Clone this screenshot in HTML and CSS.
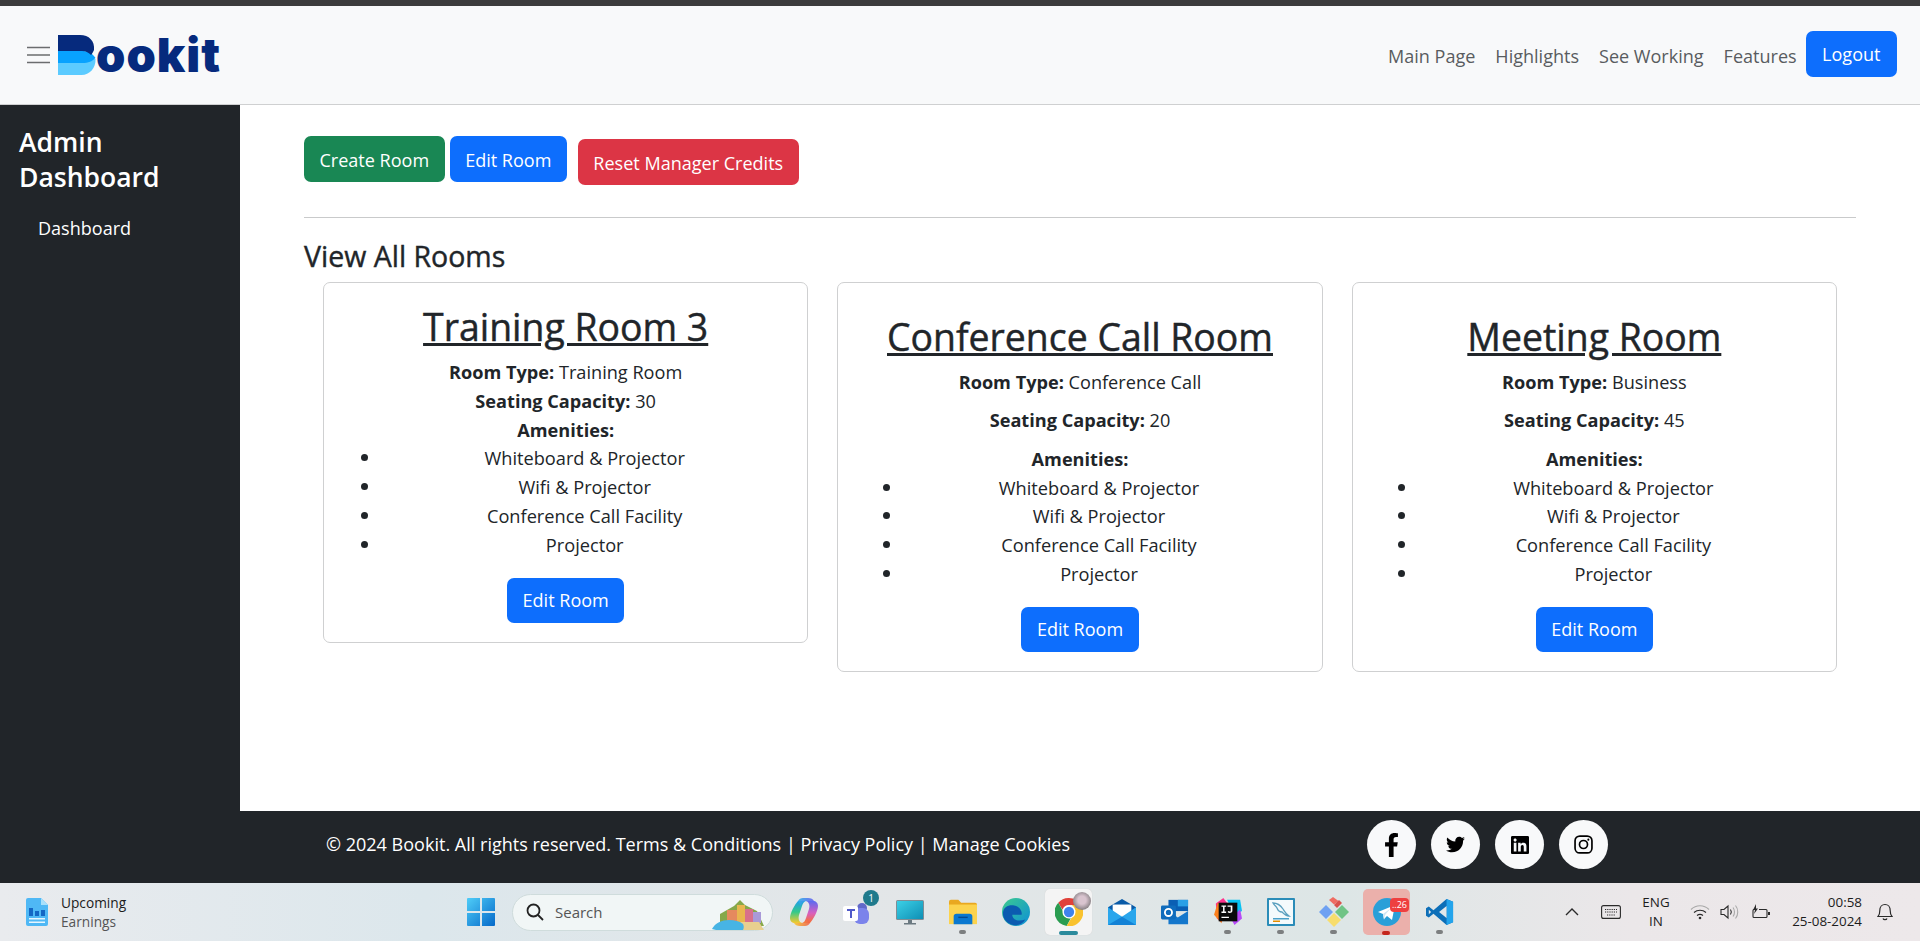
FILE: index.html
```html
<!DOCTYPE html>
<html lang="en">
<head>
<meta charset="utf-8">
<title>Bookit</title>
<link rel="stylesheet" href="styles.css">
</head>
<body>
<div class="top-strip"></div>
<header class="navbar">
  <div class="brand">
    <svg class="burger" viewBox="0 0 23 18"><path d="M0 1.5h23M0 9h23M0 16.500h23"/></svg>
    <div class="logo">
      <svg class="logo-b" viewBox="0 0 38 40">
        <path fill="#5ccbff" d="M0 24h37.500c.5 9-6 16-14 16H0z"/>
        <path fill="#08a2ff" d="M0 16h24c6 0 10 2 13.500 7-3 3-7 5-13.500 5H0z"/>
        <path fill="#062a7d" d="M0 0h22c9 0 15 6 14 15-1.500 3-2 4-3 5-2-2-5-4-9-4H0z"/>
      </svg>
      <span class="logo-text">ookit</span>
    </div>
  </div>
  <nav class="nav-links">
    <a>Main Page</a><a>Highlights</a><a>See Working</a><a>Features</a>
    <button class="btn blue logout">Logout</button>
  </nav>
</header>
<div class="shell">
  <aside class="sidebar">
    <h4>Admin Dashboard</h4>
    <a>Dashboard</a>
  </aside>
  <div class="right">
    <main class="main">
      <div class="actions">
        <button class="btn green">Create Room</button>
        <button class="btn blue">Edit Room</button>
        <button class="btn red">Reset Manager Credits</button>
      </div>
      <hr>
      <h3>View All Rooms</h3>
      <div class="cards">
        <article class="card tight">
          <h2>Training Room 3</h2>
          <p><b>Room Type:</b> Training Room</p>
          <p><b>Seating Capacity:</b> 30</p>
          <p><b>Amenities:</b></p>
          <ul><li>Whiteboard &amp; Projector</li><li>Wifi &amp; Projector</li><li>Conference Call Facility</li><li>Projector</li></ul>
          <button class="btn blue">Edit Room</button>
        </article>
        <article class="card">
          <h2>Conference Call Room</h2>
          <p><b>Room Type:</b> Conference Call</p>
          <p><b>Seating Capacity:</b> 20</p>
          <p class="last"><b>Amenities:</b></p>
          <ul><li>Whiteboard &amp; Projector</li><li>Wifi &amp; Projector</li><li>Conference Call Facility</li><li>Projector</li></ul>
          <button class="btn blue">Edit Room</button>
        </article>
        <article class="card">
          <h2>Meeting Room</h2>
          <p><b>Room Type:</b> Business</p>
          <p><b>Seating Capacity:</b> 45</p>
          <p class="last"><b>Amenities:</b></p>
          <ul><li>Whiteboard &amp; Projector</li><li>Wifi &amp; Projector</li><li>Conference Call Facility</li><li>Projector</li></ul>
          <button class="btn blue">Edit Room</button>
        </article>
      </div>
    </main>
    <footer class="footer">
      <div class="copy">© 2024 Bookit. All rights reserved. Terms &amp; Conditions | Privacy Policy | Manage Cookies</div>
      <div class="socials">
        <a class="social"><svg class="i-fb" viewBox="0 0 320 512"><path d="M279.14 288l14.22-92.66h-88.91v-60.13c0-25.35 12.42-50.06 52.24-50.06h40.42V6.26S260.43 0 225.36 0c-73.22 0-121.08 44.38-121.08 124.72v70.62H22.89V288h81.39v224h100.17V288z"/></svg></a>
        <a class="social"><svg class="i-tw" viewBox="0 0 512 512"><path d="M459.37 151.716c.325 4.548.325 9.097.325 13.645 0 138.72-105.583 298.558-298.558 298.558-59.452 0-114.68-17.219-161.137-47.106 8.447.974 16.568 1.299 25.34 1.299 49.055 0 94.213-16.568 130.274-44.832-46.132-.975-84.792-31.188-98.112-72.772 6.498.974 12.995 1.624 19.818 1.624 9.421 0 18.843-1.3 27.614-3.573-48.081-9.747-84.143-51.98-84.143-102.985v-1.299c13.969 7.797 30.214 12.67 47.431 13.319-28.264-18.843-46.781-51.005-46.781-87.391 0-19.492 5.197-37.36 14.294-52.954 51.655 63.675 129.3 105.258 216.365 109.807-1.624-7.797-2.599-15.918-2.599-24.04 0-57.828 46.782-104.934 104.934-104.934 30.213 0 57.502 12.67 76.67 33.137 23.715-4.548 46.456-13.32 66.599-25.34-7.798 24.366-24.366 44.833-46.132 57.827 21.117-2.273 41.584-8.122 60.426-16.243-14.292 20.791-32.161 39.308-52.628 54.253z"/></svg></a>
        <a class="social"><svg class="i-li" viewBox="0 32 448 448"><path d="M416 32H31.9C14.3 32 0 46.5 0 64.3v383.4C0 465.5 14.3 480 31.9 480H416c17.6 0 32-14.5 32-32.3V64.3c0-17.8-14.4-32.3-32-32.3zM135.4 416H69V202.2h66.5V416zm-33.2-243c-21.3 0-38.5-17.3-38.5-38.5S80.9 96 102.2 96c21.2 0 38.5 17.3 38.5 38.5 0 21.3-17.2 38.5-38.5 38.500zm282.100 243h-66.400V312c0-24.800-.5-56.700-34.500-56.700-34.600 0-39.900 27-39.900 54.900V416h-66.400V202.200h63.700v29.200h.9c8.900-16.800 30.600-34.500 62.900-34.500 67.200 0 79.700 44.300 79.700 101.900V416z"/></svg></a>
        <a class="social"><svg class="i-ig" viewBox="0 0 18 18"><rect x="1" y="1" width="16" height="16" rx="4.500"/><circle cx="9" cy="9" r="3.800"/><circle class="dot" cx="13.600" cy="4.400" r="1"/></svg></a>
      </div>
    </footer>
  </div>
</div>
<div class="taskbar">
  <div class="tb-left">
    <svg class="tb-widget" viewBox="0 0 22 28">
      <path fill="#4fb8f5" d="M2 0h13l7 7v19a2 2 0 0 1-2 2H2a2 2 0 0 1-2-2V2a2 2 0 0 1 2-2z"/>
      <path fill="#a8e0fb" d="M15 0l7 7h-7z"/>
      <path fill="#1467c4" d="M3 10h4v8H3zM9 13h4v5H9zM15 12h4v6h-4z"/>
      <path fill="#e6f6ff" d="M3 20h16v1.500H3zM3 23.500h16V25H3z"/>
    </svg>
    <div class="tb-news"><span>Upcoming</span><span class="muted">Earnings</span></div>
  </div>
  <div class="tb-center">
    <svg class="tb-ico win" viewBox="0 0 28 28">
      <defs><linearGradient id="w" x1="0" y1="0" x2="1" y2="1"><stop offset="0" stop-color="#4fcdf8"/><stop offset="1" stop-color="#0569c9"/></linearGradient></defs>
      <path fill="url(#w)" d="M1 0h12v13H0V1a1 1 0 0 1 1-1zM15 0h12a1 1 0 0 1 1 1v12H15zM0 15h13v13H1a1 1 0 0 1-1-1zM15 15h13v12a1 1 0 0 1-1 1H15z"/>
    </svg>
    <div class="search">
      <svg class="s-ico" viewBox="0 0 18 18"><circle cx="7.500" cy="7.500" r="6"/><path d="M12 12l5 5"/></svg>
      <span>Search</span>
      <svg class="s-pic" viewBox="0 0 54 32">
        <path fill="#86a84a" d="M8 16L22 8l6-6 5 5 12 6 7 15H8z"/>
        <path fill="#e58a5e" d="M15 12h10v12H15z"/>
        <path fill="#e9b64f" d="M25 7h8v17h-8z"/>
        <path fill="#d8708b" d="M33 11h8v13h-8z"/>
        <path fill="#a99ad8" d="M41 14h8v11h-8z"/>
        <path fill="#e8cf8f" d="M18 24h29l5 8H28z"/>
        <path fill="#47b4e4" d="M0 31c3-6 10-9 17-9 6 0 10 1 14 4 1 2 1 4 0 6H4z"/>
      </svg>
    </div>
    <div class="tile first">
      <svg class="tb-ico" viewBox="0 0 28 28">
        <defs>
          <linearGradient id="c1" x1="0" y1="0" x2="0" y2="1"><stop offset="0" stop-color="#1f9fe8"/><stop offset=".5" stop-color="#35c98a"/><stop offset="1" stop-color="#f6c92e"/></linearGradient>
          <linearGradient id="c2" x1="0" y1="0" x2="0" y2="1"><stop offset="0" stop-color="#5b6cf0"/><stop offset=".55" stop-color="#d85fc0"/><stop offset="1" stop-color="#f8702f"/></linearGradient>
          <linearGradient id="c3" x1="0" y1="0" x2="1" y2="0"><stop offset="0" stop-color="#2bb0e8"/><stop offset="1" stop-color="#6a5ef0"/></linearGradient>
          <linearGradient id="c4" x1="0" y1="0" x2="1" y2="0"><stop offset="0" stop-color="#f6c92e"/><stop offset="1" stop-color="#f0604c"/></linearGradient>
        </defs>
        <path fill="url(#c1)" d="M8 3C5 6 0 15 0 20c0 3 2 5 5 5h7c-3-1-4-4-3-8l3-9c1-3 2-5 5-5z"/>
        <path fill="url(#c2)" d="M20 25c3-3 8-12 8-17 0-3-2-5-5-5h-7c3 1 4 4 3 8l-3 9c-1 3-2 5-5 5z"/>
        <path fill="url(#c3)" d="M8 3c1-2 3-3 5-3h5c3 0 5 1 6 3h-8c-3 0-5 2-5 5z" opacity=".9"/>
        <path fill="url(#c4)" d="M20 25c-1 2-3 3-5 3H10c-3 0-5-1-6-3h8c3 0 5-2 5-5z" opacity=".9"/>
      </svg>
    </div>
    <div class="tile">
      <svg class="tb-ico" viewBox="0 0 28 28">
        <circle fill="#6168c9" cx="19" cy="10" r="5"/>
        <rect fill="#7b83eb" x="11" y="10" width="15" height="16" rx="6"/>
        <rect fill="#fff" x="0" y="8" width="15" height="15" rx="2"/>
        <path fill="#5059c9" d="M4 11h8v2H9v7H7v-7H4z"/>
      </svg>
      <span class="teams-badge">1</span>
    </div>
    <div class="tile">
      <svg class="tb-ico" viewBox="0 0 28 28">
        <defs><linearGradient id="m" x1="0" y1="0" x2="1" y2="1"><stop offset="0" stop-color="#3bd0e6"/><stop offset="1" stop-color="#0f8fb5"/></linearGradient></defs>
        <rect fill="#7f8d95" x="0" y="2" width="28" height="20" rx="1.500"/>
        <rect fill="url(#m)" x="1" y="3" width="26" height="18"/>
        <path fill="#6a7880" d="M12 22h4v3h4v1.500H8V25h4z"/>
      </svg>
    </div>
    <div class="tile run">
      <svg class="tb-ico" viewBox="0 0 30 28">
        <path fill="#e9a820" d="M0 3a2 2 0 0 1 2-2h8l3 3h15a2 2 0 0 1 2 2v3H0z"/>
        <path fill="#fcd34d" d="M0 6h30v21H0z"/>
        <path fill="#0a78d0" d="M5 19a3 3 0 0 1 3-3h14a3 3 0 0 1 3 3v8H5z"/>
        <path fill="#044a8f" d="M10 19h10v1.500H10z"/>
      </svg>
    </div>
    <div class="tile">
      <svg class="tb-ico" viewBox="0 0 30 30">
        <defs><linearGradient id="e1" x1="0" y1="0" x2="1" y2="1"><stop offset="0" stop-color="#3ccb8e"/><stop offset="1" stop-color="#0d8fd8"/></linearGradient></defs>
        <circle fill="url(#e1)" cx="15" cy="15" r="15"/>
        <path fill="#0b5bb0" d="M1 17C1 9 8 7 13 8c5 1 9 5 8 10H11c0 5 6 8 14 5-3 5-9 7-13 6C6 28 1 23 1 17z"/>
      </svg>
    </div>
    <div class="tile active">
      <svg class="tb-ico" viewBox="0 0 30 30">
        <path fill="#e0413a" d="M15 0a15 15 0 0 1 13 7.500H15a7.500 7.500 0 0 0-7 5L3.500 5A15 15 0 0 1 15 0z"/>
        <path fill="#2a9c50" d="M3.500 5L9 15a6.500 6.500 0 0 0 8 6.500L12.500 30A15 15 0 0 1 3.500 5z"/>
        <path fill="#f9c22e" d="M28 7.500A15 15 0 0 1 12.500 30L19 19a7 7 0 0 0-1-11.500z"/>
        <circle fill="#fff" cx="15" cy="15" r="7"/>
        <circle fill="#3f83ed" cx="15" cy="15" r="5.500"/>
      </svg>
      <span class="avatar"></span>
      <span class="active-bar"></span>
    </div>
    <div class="tile">
      <svg class="tb-ico" viewBox="0 0 30 28">
        <path fill="#0a5ba8" d="M15 0l15 9v6H0V9z"/>
        <path fill="#fff" d="M5 6h20v12H5z"/>
        <path fill="#2aa6ec" d="M0 9l15 10L30 9v19H0z"/>
        <path fill="#1382d6" d="M0 28l15-9 15 9z"/>
      </svg>
    </div>
    <div class="tile">
      <svg class="tb-ico" viewBox="0 0 30 28">
        <path fill="#0a5fb4" d="M8 1h21v12H8z"/>
        <path fill="#2aa0e6" d="M18 1h11v7H18z"/>
        <path fill="#1477cc" d="M8 13l10 7 11-7v14H8z"/>
        <rect fill="#0f6cbd" x="0" y="7" width="16" height="15" rx="1.500"/>
        <circle fill="none" stroke="#fff" stroke-width="2" cx="8" cy="14.500" r="3.800"/>
      </svg>
    </div>
    <div class="tile run">
      <svg class="tb-ico" viewBox="0 0 30 30">
        <path fill="#ff318c" d="M2 6L10 0l6 8-8 18-5-4z"/>
        <path fill="#fc801d" d="M0 18L4 5l8 4-4 18z"/>
        <path fill="#07c3f2" d="M14 2l14 0 2 12-8 4z"/>
        <path fill="#b74af7" d="M18 22l10-10 2 10-8 7z"/>
        <rect fill="#0a0a0a" x="5" y="5" width="20" height="20"/>
        <path fill="#fff" d="M8 8h5v1.500h-1.700v5H13V16H8v-1.500h1.700v-5H8zM14.500 8h5.200v6c0 2-3.700 3-5.200 1l1-1c.9.800 2.400.7 2.400-.4V9.500h-3.400zM8 20h8v1.500H8z"/>
      </svg>
    </div>
    <div class="tile run">
      <svg class="tb-ico" viewBox="0 0 28 28">
        <rect fill="#2a8cb8" width="28" height="28" rx="1"/>
        <rect fill="#f4fafc" x="2" y="2" width="24" height="24"/>
        <path fill="none" stroke="#5ba0bf" stroke-width="1.300" d="M6 5c5 0 8 3 10 6s3 5 6 7c-3 0-5-2-7-4-2 0-4-1-5-4-1-2-3-3-4-5z"/>
        <path fill="#4aa0c8" d="M6 20h16v1.500H6z"/>
        <path fill="#e48e00" d="M6 22.500h7V24H6z"/>
      </svg>
    </div>
    <div class="tile run">
      <svg class="tb-ico wide" viewBox="0 0 30 30">
        <path fill="#ef6c62" d="M15 7.500L10 3l4-3 5.500 4z"/>
        <path fill="#d9534c" d="M15 8l5-5 3 3-5 5z"/>
        <path fill="#6fa1f2" d="M7 8l7 7-7 7-7-7z"/>
        <path fill="#70c486" d="M23 8l7 7-7 7-7-7z"/>
        <path fill="#f7dd6c" d="M15 16l7 7-7 7-7-7z"/>
      </svg>
    </div>
    <div class="tile tele">
      <svg class="tb-ico" viewBox="0 0 28 28">
        <circle fill="#2a9fd8" cx="14" cy="14" r="14"/>
        <path fill="#fff" d="M5 14l17-7-3 15-5-4-3 3-1-5z"/>
        <path fill="#cfe6f3" d="M10 16l8-6-6 7-1 5z"/>
      </svg>
      <span class="tele-badge">..26</span>
      <span class="tele-bar"></span>
    </div>
    <div class="tile run">
      <svg class="tb-ico" viewBox="0 0 30 30">
        <path fill="#0d6fb8" d="M22 1l7 3v22l-7 3L8 17l-5 4-3-2V11l3-2 5 4z"/>
        <path fill="#23a4ec" d="M22 1l7 3v22l-7 3z"/>
        <path fill="#e2e8ea" d="M22 8.500L14 15l8 6.500z"/>
        <path fill="#e2e8ea" d="M3 12.500L5.500 15 3 17.500z"/>
      </svg>
    </div>
  </div>
  <div class="tb-right">
    <svg class="tray chev" viewBox="0 0 14 8"><path d="M1 7l6-6 6 6"/></svg>
    <svg class="tray kbd" viewBox="0 0 20 14"><rect x=".6" y=".6" width="18.800" height="12.800" rx="2"/><path d="M4 4.500h12M4 7h12M6 10h8" stroke-dasharray="1.200 1"/></svg>
    <div class="lang"><span>ENG</span><span>IN</span></div>
    <svg class="tray wifi" viewBox="0 0 20 16"><path class="faint" d="M1 5.500c5-5 13-5 18 0"/><path d="M4 8.500c3.500-3 8.500-3 12 0M7 11.500c2-1.500 4-1.500 6 0"/><circle class="fill" cx="10" cy="14" r="1.300"/></svg>
    <svg class="tray vol" viewBox="0 0 20 16"><path d="M1 5.500h3L8 2v12l-4-3.500H1z"/><path d="M10.500 5.500c1 1.500 1 3.500 0 5"/><path class="faint" d="M13 3.500c2 2.500 2 6.500 0 9M15.500 1.500c3 3.500 3 9.500 0 13"/></svg>
    <svg class="tray batt" viewBox="0 0 20 16"><path d="M3 5.500a1 1 0 0 0-1 1v6a1 1 0 0 0 1 1h12a1 1 0 0 0 1-1v-6a1 1 0 0 0-1-1H8"/><path class="fill" d="M17 8h2v3h-2zM5 0L2 6h2l-1 4 4-5.500H5z"/></svg>
    <div class="clock"><span>00:58</span><span>25-08-2024</span></div>
    <svg class="tray bell" viewBox="0 0 16 18"><path d="M1 13.500c1.500-1.500 1.800-3 1.800-6 0-3.500 2.200-6 5.200-6s5.200 2.500 5.200 6c0 3 .3 4.500 1.800 6zM6 15.500c.5 1.600 3.500 1.600 4 0"/></svg>
  </div>
</div>
</body>
</html>
```
FILE: styles.css
```css
* { box-sizing: border-box; }
html, body { margin: 0; height: 941px; overflow: hidden; }
body {
  font-family: "Open Sans", "Liberation Sans", sans-serif;
  font-size: 18.05px;
  line-height: 28.8px;
  color: #212529;
  background: #fff;
}
.top-strip { height: 6px; background: #3c3c3c; }

.navbar {
  height: 99px;
  background: #f8f9fa;
  border-bottom: 1px solid #cfd0d1;
  display: flex;
  justify-content: space-between;
  align-items: center;
  padding: 0 23px 0 27px;
}
.brand { display: flex; align-items: center; gap: 8px; }
.burger { width: 23px; height: 18px; fill: none; stroke: #6b6d6f; stroke-width: 1.7; }
.logo { display: flex; align-items: center; height: 42px; }
.logo-b { width: 38px; height: 40px; }
.logo-text {
  font-family: Inter, "Open Sans", sans-serif;
  font-weight: 900;
  font-size: 47px;
  line-height: 40px;
  letter-spacing: 1px;
  color: #062a7d;
}
.nav-links { display: flex; align-items: center; }
.nav-links a { color: #595c5f; margin-right: 20px; padding-top: 2px; }
.nav-links a:nth-of-type(4) { margin-right: 9px; }
.btn.logout { margin-top: -2px; padding: 0 16.5px; }

.btn {
  font: inherit;
  height: 45.6px;
  padding: 0 15.5px;
  border: 0;
  border-radius: 7px;
  color: #fff;
}
.blue { background: #0d6efd; }
.green { background: #198754; }
.red { background: #dc3545; margin: 3px 0 0 6px; }
.actions .btn { padding-top: 3px; }

.shell { display: flex; height: 778px; }
.sidebar { width: 240px; background: #212529; color: #fff; padding: 20px 19px 0; }
.sidebar h4 { margin: 0 0 19px; font-size: 26.5px; font-weight: 600; line-height: 35px; }
.sidebar a { display: block; padding-left: 19px; }
.right { flex: 1; display: flex; flex-direction: column; }
.main { flex: 1; padding: 31px 64px 0; }
.actions { display: flex; align-items: flex-start; gap: 5px; }
.main hr { margin: 32px 0 19px; border: 0; border-top: 1px solid #c9cacb; }
.main h3 {
  margin: 0 0 7px;
  font-size: 28.5px;
  font-weight: 500;
  line-height: 38px;
  -webkit-text-stroke: .4px #212529;
}
.cards {
  display: grid;
  grid-template-columns: repeat(3, 1fr);
  gap: 29px;
  padding: 0 19px;
  align-items: start;
}
.card {
  border: 1px solid #cfd0d1;
  border-radius: 7px;
  padding: 31px 19px 19px;
  text-align: center;
}
.card h2 {
  margin: 0 0 8.5px;
  font-size: 37.4px;
  font-weight: 500;
  line-height: 46px;
  text-decoration: underline;
  -webkit-text-stroke: .45px #212529;
}
.card p { margin: 0 0 9.6px; font-size: 18.15px; }
.card p.last { margin: 0; }
.card.tight { padding-top: 21px; }
.card.tight p { margin: 0; }
.card b { font-weight: 700; }
.card ul { margin: 0 0 18px; padding: 0 0 0 38px; font-size: 18.2px; list-style: none; }
.card li { position: relative; }
.card li::before {
  content: "";
  position: absolute;
  left: -12px;
  top: 10px;
  width: 7px;
  height: 7px;
  border-radius: 50%;
  background: #212529;
}
.card.tight li::before { left: -20.5px; }
.card .btn { display: inline-block; }

.footer {
  height: 72px;
  background: #212529;
  color: #fff;
  display: flex;
  align-items: center;
  padding: 0 0 5px 86px;
}
.copy { width: 1041px; }
.socials { display: flex; gap: 15px; }
.social {
  width: 49px;
  height: 49px;
  border-radius: 50%;
  background: #f8f9fa;
  display: flex;
  align-items: center;
  justify-content: center;
}
.i-fb { width: 15px; height: 24px; }
.i-tw { width: 19px; height: 19px; }
.i-li { width: 18px; height: 18px; }
.i-ig { width: 19px; height: 19px; fill: none; stroke: #000; stroke-width: 1.6; }
.i-ig .dot { fill: #000; stroke: none; }

.taskbar {
  height: 58px;
  background: linear-gradient(90deg, #e9ebee 0%, #dce7ec 22%, #e3e6e8 45%, #dde6e6 70%, #ebe7e9 85%, #ede8ea 100%);
  display: flex;
  align-items: center;
  color: #1c1c1c;
}
.tb-left { width: 467px; display: flex; align-items: center; padding-left: 26px; gap: 13px; }
.tb-widget { width: 22px; height: 28px; }
.tb-news { display: flex; flex-direction: column; font-size: 13.7px; line-height: 19px; }
.muted { color: #555; }
.tb-center { width: 1000px; display: flex; align-items: center; }
.tb-ico { width: 28px; height: 28px; display: block; }
.tb-ico.wide { width: 30px; height: 30px; }
.win { margin-right: 17px; }
.search {
  width: 261px;
  height: 37px;
  border-radius: 19px;
  background: #f1f6f6;
  border: 1px solid #cfdcdc;
  display: flex;
  align-items: center;
  padding-left: 13px;
  font-size: 15px;
  color: #555;
  position: relative;
}
.s-ico { width: 18px; height: 18px; fill: none; stroke: #222; stroke-width: 1.8; margin-right: 11px; }
.s-pic { position: absolute; right: 6px; bottom: 0; width: 54px; height: 32px; }
.tile {
  width: 53px;
  height: 46px;
  display: flex;
  align-items: center;
  justify-content: center;
  position: relative;
  flex: none;
}
.tile.first { margin-left: 4px; }
.tile.run::after {
  content: "";
  position: absolute;
  left: 23px;
  bottom: 1px;
  width: 7px;
  height: 4px;
  border-radius: 2px;
  background: #7c7f80;
}
.teams-badge {
  position: absolute;
  top: 1px;
  right: 4px;
  width: 16px;
  height: 16px;
  border-radius: 50%;
  background: #1f7a8c;
  color: #fff;
  font-size: 10px;
  line-height: 16px;
  text-align: center;
}
.active {
  width: 47px;
  margin: 0 3px;
  background: #f4f4f4;
  border-radius: 5px;
  box-shadow: 0 0 1px #ccc;
}
.avatar {
  position: absolute;
  top: 3px;
  right: 1px;
  width: 18px;
  height: 18px;
  border-radius: 50%;
  background: radial-gradient(circle at 50% 45%, #d9c4cf 30%, #6f6c6e 85%);
}
.active-bar {
  position: absolute;
  left: 14px;
  bottom: 0;
  width: 19px;
  height: 4px;
  border-radius: 2px;
  background: #2a8a9c;
}
.tele {
  width: 47px;
  margin: 0 3px;
  background: #ebb0ab;
  border-radius: 5px;
}
.tele-badge {
  position: absolute;
  top: 9px;
  right: 1px;
  height: 14px;
  padding: 0 2px;
  border-radius: 4px;
  background: #ee3f3f;
  color: #fff;
  font-size: 9px;
  line-height: 14px;
}
.tele-bar {
  position: absolute;
  left: 19px;
  bottom: 0;
  width: 8px;
  height: 4px;
  border-radius: 2px;
  background: #c4261d;
}
.tb-right { flex: 1; display: flex; align-items: center; font-size: 13.4px; line-height: 19px; min-width: 0; }
.tray { fill: none; stroke: #2a2a2a; stroke-width: 1.1; flex: none; }
.tray .fill { fill: #2a2a2a; stroke: none; }
.tray .faint { stroke: #a9a9a9; }
.chev { width: 14px; height: 8px; stroke-width: 1.4; margin-left: 98px; }
.kbd { width: 20px; height: 14px; margin-left: 22px; }
.lang { width: 32px; margin-left: 19px; display: flex; flex-direction: column; align-items: center; }
.wifi { width: 20px; height: 16px; margin-left: 18px; }
.vol { width: 20px; height: 16px; margin-left: 10px; }
.batt { width: 20px; height: 16px; margin-left: 11px; }
.clock { width: 80px; margin-left: 11px; display: flex; flex-direction: column; align-items: flex-end; }
.bell { width: 16px; height: 18px; margin-left: 15px; stroke-width: 1.2; }
```
